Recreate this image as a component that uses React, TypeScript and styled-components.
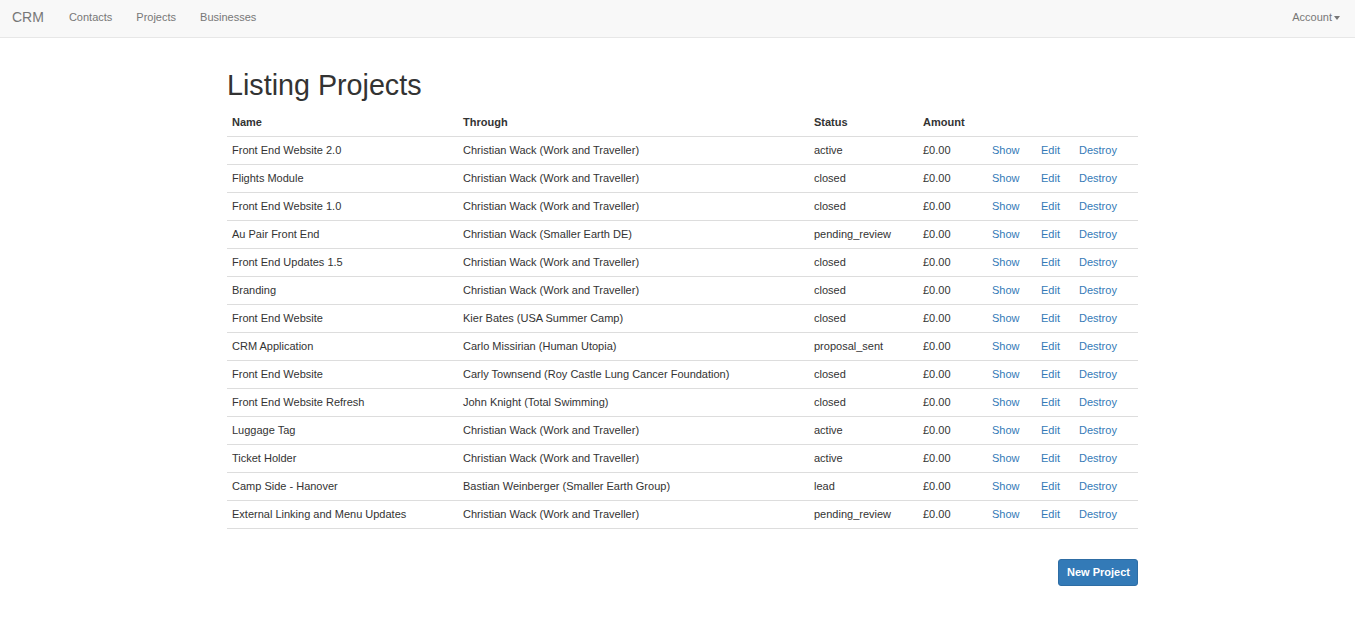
import React from "react";
import styled, { createGlobalStyle } from "styled-components";

const GlobalStyle = createGlobalStyle`
	body {
		margin: 0;
		background: #fff;
		font-family: "Liberation Sans", Arial, sans-serif;
		font-size: 12px;
		line-height: 1.42857;
		color: #333;
	}
`;

const Navbar = styled.nav`
	display: flex;
	align-items: center;
	justify-content: space-between;
	padding: 0 15px 1px 12px;
	box-sizing: border-box;
	height: 38px;
	background: #f8f8f8;
	border-bottom: 1px solid #e7e7e7;
`;

const NavGroup = styled.div`
	display: flex;
	align-items: center;
`;

const Brand = styled.a`
	font-size: 14px;
	color: #777;
	text-decoration: none;
	margin-right: 25px;
`;

const NavLink = styled.a<{ $last?: boolean }>`
	font-size: 11px;
	color: #777;
	text-decoration: none;
	margin-right: ${(p) => (p.$last ? "0" : "24px")};
`;

const Caret = styled.span`
	display: inline-block;
	width: 0;
	height: 0;
	margin-left: 2px;
	vertical-align: middle;
	border-top: 4px solid #777;
	border-left: 3px solid transparent;
	border-right: 3px solid transparent;
`;

const Container = styled.main`
	width: 911px;
	margin: 0 auto;
	padding: 0 0 40px 10px;
`;

const Title = styled.h1`
	margin: 32px 0 7px;
	font-size: 28.7px;
	font-weight: 400;
	line-height: 1.1;
	color: #333;
`;

const Table = styled.table`
	width: 100%;
	border-collapse: collapse;
	table-layout: fixed;
`;

const Th = styled.th`
	text-align: left;
	font-size: 11px;
	font-weight: bold;
	line-height: 17px;
	padding: 5px;
	border-bottom: 1px solid #ddd;
`;

const Td = styled.td`
	padding: 5px;
	border-bottom: 1px solid #ddd;
	font-size: 11px;
	line-height: 17px;
	white-space: nowrap;
`;

const Link = styled.a`
	color: #337ab7;
	text-decoration: none;
`;

const Actions = styled.div`
	display: flex;
	justify-content: flex-end;
	margin-top: 30px;
`;

const Button = styled.button`
	font-family: inherit;
	font-size: 11px;
	font-weight: bold;
	line-height: 17px;
	color: #fff;
	background: #337ab7;
	border: 1px solid #2e6da4;
	border-radius: 3px;
	padding: 4px 7px 4px 8px;
	height: 27px;
	cursor: pointer;
`;

const projects = [
	["Front End Website 2.0", "Christian Wack (Work and Traveller)", "active"],
	["Flights Module", "Christian Wack (Work and Traveller)", "closed"],
	["Front End Website 1.0", "Christian Wack (Work and Traveller)", "closed"],
	["Au Pair Front End", "Christian Wack (Smaller Earth DE)", "pending_review"],
	["Front End Updates 1.5", "Christian Wack (Work and Traveller)", "closed"],
	["Branding", "Christian Wack (Work and Traveller)", "closed"],
	["Front End Website", "Kier Bates (USA Summer Camp)", "closed"],
	["CRM Application", "Carlo Missirian (Human Utopia)", "proposal_sent"],
	["Front End Website", "Carly Townsend (Roy Castle Lung Cancer Foundation)", "closed"],
	["Front End Website Refresh", "John Knight (Total Swimming)", "closed"],
	["Luggage Tag", "Christian Wack (Work and Traveller)", "active"],
	["Ticket Holder", "Christian Wack (Work and Traveller)", "active"],
	["Camp Side - Hanover", "Bastian Weinberger (Smaller Earth Group)", "lead"],
	["External Linking and Menu Updates", "Christian Wack (Work and Traveller)", "pending_review"],
];

export default function App() {
	return (
		<>
			<GlobalStyle />
			<Navbar>
				<NavGroup>
					<Brand href="#">CRM</Brand>
					<NavLink href="#">Contacts</NavLink>
					<NavLink href="#">Projects</NavLink>
					<NavLink href="#">Businesses</NavLink>
				</NavGroup>
				<NavGroup>
					<NavLink href="#" $last>
						Account<Caret />
					</NavLink>
				</NavGroup>
			</Navbar>

			<Container>
				<Title>Listing Projects</Title>
				<Table>
					<colgroup>
						<col style={{ width: 231 }} />
						<col style={{ width: 351 }} />
						<col style={{ width: 109 }} />
						<col style={{ width: 69 }} />
						<col style={{ width: 49 }} />
						<col style={{ width: 38 }} />
						<col style={{ width: 64 }} />
					</colgroup>
					<thead>
						<tr>
							<Th>Name</Th>
							<Th>Through</Th>
							<Th>Status</Th>
							<Th>Amount</Th>
							<Th />
							<Th />
							<Th />
						</tr>
					</thead>
					<tbody>
						{projects.map(([name, through, status], i) => (
							<tr key={i}>
								<Td>{name}</Td>
								<Td>{through}</Td>
								<Td>{status}</Td>
								<Td>£0.00</Td>
								<Td><Link href="#">Show</Link></Td>
								<Td><Link href="#">Edit</Link></Td>
								<Td><Link href="#">Destroy</Link></Td>
							</tr>
						))}
					</tbody>
				</Table>
				<Actions>
					<Button>New Project</Button>
				</Actions>
			</Container>
		</>
	);
}
